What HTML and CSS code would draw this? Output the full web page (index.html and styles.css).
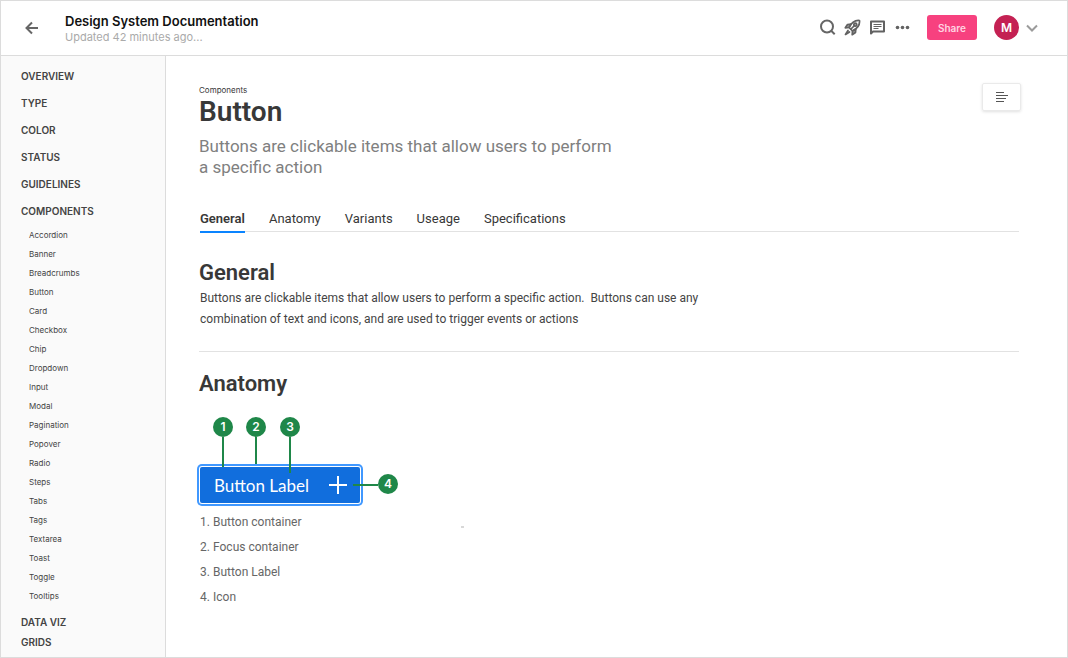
FILE: index.html
```html
<!DOCTYPE html>
<html lang="en">
<head>
    <meta charset="UTF-8">
    <meta name="viewport" content="width=device-width, initial-scale=1.0">
    <title>Design System Documentation</title>
    <link rel="stylesheet" href="styles.css">
</head>
<body>
    <header class="topbar">
        <button class="icon-btn back" aria-label="Back">
            <svg width="14" height="14" viewBox="0 0 14 14" fill="none" stroke="#666" stroke-width="2"><path d="M13 7H2M7 1.5L1.5 7L7 12.5"/></svg>
        </button>
        <div class="doc-info">
            <div class="doc-title">Design System Documentation</div>
            <div class="doc-updated">Updated 42 minutes ago...</div>
        </div>
        <div class="actions">
            <button class="icon-btn" aria-label="Search">
                <svg width="17" height="17" viewBox="0 0 17 17" fill="none" stroke="#666" stroke-width="2"><circle cx="8" cy="7.500" r="6"/><path d="M12.200 11.700L15.700 15.200"/></svg>
            </button>
            <button class="icon-btn" aria-label="Launch">
                <svg width="17" height="17" viewBox="0 0 17 17" fill="none" stroke="#626262" stroke-width="1.700" stroke-linejoin="round" stroke-linecap="round"><path d="M15.500 1.500C11 1 7.500 3.500 5 8.500L8.500 12C13.500 9.500 16 6 15.500 1.500Z"/><path fill="#9a9a9a" d="M7 5.200L3.500 5.500L1.300 8.800L5 8.500ZM11.800 10L11.500 13.500L8.200 15.700L8.500 12Z"/><path d="M4 11.500L1.500 15.500L5.500 13M7 10L11 6"/><circle cx="11.300" cy="5.700" r="1.500"/></svg>
            </button>
            <button class="icon-btn" aria-label="Comments">
                <svg width="17" height="17" viewBox="0 0 17 17" fill="none" stroke="#626262" stroke-width="2" stroke-linejoin="round"><path d="M2 14.500V2.500H15V12.500H4Z"/><path stroke-width="1.200" d="M4.500 5.500H12.500M4.500 7.500H12.500M4.500 9.500H9.500"/></svg>
            </button>
            <button class="icon-btn" aria-label="More">
                <svg width="17" height="17" viewBox="0 0 17 17" fill="#626262"><circle cx="3.500" cy="8.500" r="1.800"/><circle cx="8.500" cy="8.500" r="1.800"/><circle cx="13.500" cy="8.500" r="1.800"/></svg>
            </button>
        </div>
        <button class="share">Share</button>
        <button class="account" aria-label="Account">
            <span class="avatar">M</span>
            <svg width="12" height="8" viewBox="0 0 12 8" fill="none" stroke="#9b9b9b" stroke-width="2"><path d="M1 1.500L6 6.500L11 1.500"/></svg>
        </button>
    </header>

    <div class="layout">
        <nav class="sidebar">
            <ul class="sections">
                <li><a href="#">OVERVIEW</a></li>
                <li><a href="#">TYPE</a></li>
                <li><a href="#">COLOR</a></li>
                <li><a href="#">STATUS</a></li>
                <li><a href="#">GUIDELINES</a></li>
                <li><a href="#">COMPONENTS</a></li>
            </ul>
            <ul class="components">
                <li><a href="#">Accordion</a></li>
                <li><a href="#">Banner</a></li>
                <li><a href="#">Breadcrumbs</a></li>
                <li><a href="#">Button</a></li>
                <li><a href="#">Card</a></li>
                <li><a href="#">Checkbox</a></li>
                <li><a href="#">Chip</a></li>
                <li><a href="#">Dropdown</a></li>
                <li><a href="#">Input</a></li>
                <li><a href="#">Modal</a></li>
                <li><a href="#">Pagination</a></li>
                <li><a href="#">Popover</a></li>
                <li><a href="#">Radio</a></li>
                <li><a href="#">Steps</a></li>
                <li><a href="#">Tabs</a></li>
                <li><a href="#">Tags</a></li>
                <li><a href="#">Textarea</a></li>
                <li><a href="#">Toast</a></li>
                <li><a href="#">Toggle</a></li>
                <li><a href="#">Tooltips</a></li>
            </ul>
            <ul class="sections compact">
                <li><a href="#">DATA VIZ</a></li>
                <li><a href="#">GRIDS</a></li>
            </ul>
        </nav>

        <main class="content">
            <div class="page-head">
                <div>
                    <div class="eyebrow">Components</div>
                    <h1>Button</h1>
                    <p class="lead">Buttons are clickable items that allow users to perform a specific action</p>
                </div>
                <button class="toc-btn" aria-label="Contents">
                    <svg width="12" height="10" viewBox="0 0 12 10" fill="none" stroke="#555" stroke-width="1"><path d="M0 .5H8M0 3.500H12M0 6.500H10M0 9.500H8"/></svg>
                </button>
            </div>

            <nav class="tabs">
                <a class="tab active" href="#general">General</a>
                <a class="tab" href="#anatomy">Anatomy</a>
                <a class="tab" href="#">Variants</a>
                <a class="tab" href="#">Useage</a>
                <a class="tab" href="#">Specifications</a>
            </nav>

            <section id="general" class="general">
                <h2>General</h2>
                <p>Buttons are clickable items that allow users to perform a specific action.&nbsp; Buttons can use any combination of text and icons, and are used to trigger events or actions</p>
            </section>

            <section id="anatomy" class="anatomy">
                <h2>Anatomy</h2>
                <div class="diagram">
                    <button class="demo-btn">
                        Button Label
                        <svg width="18" height="18" viewBox="0 0 18 18" fill="none" stroke="#fff" stroke-width="2"><path d="M9 0V18M0 9H18"/></svg>
                    </button>
                    <span class="pin pin-1">1</span>
                    <span class="pin pin-2">2</span>
                    <span class="pin pin-3">3</span>
                    <span class="pin pin-4">4</span>
                </div>
                <ol class="legend">
                    <li>Button container</li>
                    <li>Focus container</li>
                    <li>Button Label</li>
                    <li>Icon</li>
                </ol>
                <span class="speck"></span>
            </section>
        </main>
    </div>
</body>
</html>
```
FILE: styles.css
```css
* {
    box-sizing: border-box;
}

body {
    margin: 0;
    min-height: 100vh;
    display: flex;
    flex-direction: column;
    border: 1px solid #dcdcdc;
    background: #fff;
    color: #383838;
    font-family: Roboto, sans-serif;
}

ul, ol {
    margin: 0;
    padding: 0;
    list-style: none;
}

a {
    color: inherit;
    text-decoration: none;
}

button {
    padding: 0;
    border: none;
    background: none;
    font-family: inherit;
    cursor: pointer;
}

svg {
    display: block;
}

/* top bar */
.topbar {
    height: 55px;
    padding: 0 29px 1px 24px;
    display: flex;
    align-items: center;
    border-bottom: 1px solid #dcdcdc;
    font-family: Inter, sans-serif;
}

.doc-info {
    margin-left: 26px;
    flex: 1;
}

.doc-title {
    font-size: 13px;
    line-height: 18px;
    font-weight: 600;
    color: #111;
}

.doc-updated {
    font-size: 11px;
    line-height: 14px;
    color: #aaa;
}

.actions {
    display: flex;
    gap: 8px;
}

.share {
    width: 50px;
    height: 25px;
    margin: 0 17px 0 16px;
    border-radius: 3px;
    background: #f7417f;
    color: #ffd3e1;
    font-size: 10px;
    font-weight: 600;
}

.account {
    display: flex;
    align-items: center;
    gap: 7px;
}

.avatar {
    width: 25px;
    height: 25px;
    border-radius: 50%;
    background: #c42153;
    color: #fff;
    font-size: 12px;
    line-height: 25px;
    font-weight: 600;
}

.layout {
    flex: 1;
    display: flex;
}

/* sidebar */
.sidebar {
    width: 165px;
    padding: 7px 20px 0;
    border-right: 1px solid #dcdcdc;
    background: #fafafa;
    color: #444;
    font-family: Inter, sans-serif;
}

.sections {
    font-size: 10px;
    line-height: 27px;
    font-weight: 600;
}

.components {
    padding: 1px 8px 0;
    font-size: 8px;
    line-height: 19px;
}

.compact {
    margin-top: 6px;
    line-height: 20px;
}

/* page */
.content {
    flex: 1;
    padding: 27px 48px 24px 33px;
}

.page-head {
    display: flex;
    justify-content: space-between;
    align-items: flex-start;
}

.eyebrow {
    padding-top: 2px;
    font-family: Inter, sans-serif;
    font-size: 8px;
    line-height: 10px;
}

h1 {
    margin: 0;
    font-size: 28px;
    line-height: 34px;
    font-weight: 600;
}

.lead {
    max-width: 420px;
    margin: 7px 0 0;
    font-size: 17px;
    line-height: 21px;
    color: #808080;
}

.toc-btn {
    width: 39px;
    height: 28px;
    margin-right: -2px;
    display: flex;
    align-items: center;
    justify-content: center;
    border: 1px solid #eaeaea;
    border-radius: 2px;
    box-shadow: 0 1px 3px rgba(0, 0, 0, 0.12);
}

.tabs {
    margin: 29px 0 0 1px;
    display: flex;
    gap: 24px;
    border-bottom: 1px solid #e2e2e2;
    font-size: 13px;
    line-height: 24px;
}

.tab {
    margin-bottom: -2px;
    border-bottom: 2px solid transparent;
}

.tab.active {
    border-color: #0a84ff;
    font-weight: 600;
}

h2 {
    margin: 0;
    font-size: 22px;
    line-height: 28px;
    font-weight: 600;
}

.general {
    padding: 27px 0 21px;
    border-bottom: 1px solid #e2e2e2;
}

.general p {
    max-width: 540px;
    margin: 1px 0 0 1px;
    font-size: 12px;
    line-height: 21px;
    color: #444;
}

.anatomy {
    position: relative;
    padding-top: 18px;
}

/* numbered callouts sit over the sample button */
.diagram {
    position: relative;
    margin: 19px 0 7px;
    padding: 50px 0 0 1px;
}

.demo-btn {
    width: 160px;
    height: 36px;
    padding: 0 13px 0 14px;
    display: flex;
    align-items: center;
    justify-content: space-between;
    border-radius: 2px;
    background: #116edd;
    box-shadow: 0 0 0 1px #fff, 0 0 0 3px #4098ff;
    color: #fff;
    font-family: Lato, sans-serif;
    font-size: 17px;
}

.pin {
    position: absolute;
    top: 0;
    width: 20px;
    height: 20px;
    border-radius: 50%;
    background: #1f8749;
    color: #fff;
    font-family: Inter, sans-serif;
    font-size: 12px;
    line-height: 20px;
    font-weight: 600;
    text-align: center;
}

.pin::after {
    content: "";
    position: absolute;
    top: 20px;
    left: 9px;
    width: 2px;
    height: 30px;
    background: #1f8749;
}

.pin-1 {
    left: 14px;
}

.pin-2 {
    left: 47px;
}

.pin-2::after {
    height: 27px;
}

.pin-3 {
    left: 81px;
}

.pin-3::after {
    height: 36px;
}

.pin-4 {
    top: 57px;
    left: 179px;
}

.pin-4::after {
    top: 10px;
    left: -25px;
    width: 25px;
    height: 2px;
}

.legend {
    padding-left: 14px;
    list-style: decimal;
    font-size: 12px;
    line-height: 25px;
    color: #666;
}

.speck {
    position: absolute;
    top: 174px;
    left: 262px;
    width: 3px;
    height: 2px;
    background: #d8d8d8;
}
```
